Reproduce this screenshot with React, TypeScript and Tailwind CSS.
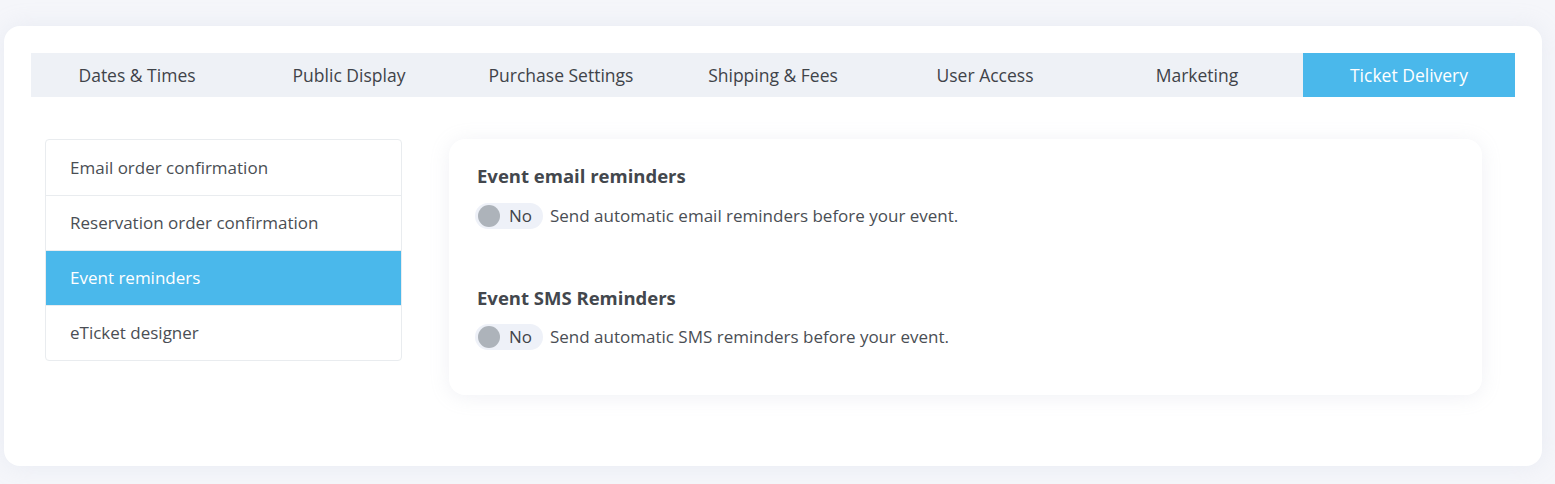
import { useState } from 'react';

const tabs = [
  'Dates & Times',
  'Public Display',
  'Purchase Settings',
  'Shipping & Fees',
  'User Access',
  'Marketing',
  'Ticket Delivery',
];

const menu = [
  'Email order confirmation',
  'Reservation order confirmation',
  'Event reminders',
  'eTicket designer',
];

function Toggle({ on, onClick }: { on: boolean; onClick: () => void }) {
  return (
    <button
      onClick={onClick}
      className="flex items-center h-[26px] w-[68px] rounded-full bg-[#eef1f8] pl-[3px] gap-[9px] text-[17px] text-[#3f4349]"
    >
      <span className={`w-[22px] h-[22px] rounded-full ${on ? 'bg-[#4ab8eb]' : 'bg-[#adb3ba]'}`} />
      {on ? 'Yes' : 'No'}
    </button>
  );
}

function App() {
  const [activeTab, setActiveTab] = useState('Ticket Delivery');
  const [activeItem, setActiveItem] = useState('Event reminders');
  const [emailOn, setEmailOn] = useState(false);
  const [smsOn, setSmsOn] = useState(false);

  return (
    <div
      className="min-h-screen bg-[#f5f6fa] pt-[26px] pb-[18px]"
      style={{ fontFamily: '"Open Sans", "Noto Sans", sans-serif' }}
    >
      <div className="ml-1 w-[1538px] h-[440px] rounded-[16px] bg-white shadow-[0_0_24px_rgba(180,190,210,0.18)] px-[27px] pt-[27px]">
        {/* Tabs */}
        <div className="grid grid-cols-7 h-[44px] bg-[#eef1f6]">
          {tabs.map((t) => (
            <button
              key={t}
              onClick={() => setActiveTab(t)}
              className={`text-[17.5px] ${activeTab === t ? 'bg-[#4ab8eb] text-white' : 'text-[#3f4349]'}`}
            >
              {t}
            </button>
          ))}
        </div>

        <div className="flex items-start gap-[47px] mt-[42px] pl-[14px] pr-[33px]">
          {/* Side menu */}
          <div className="w-[357px] shrink-0 rounded-[4px] border border-[#e9ecef] bg-white overflow-hidden">
            {menu.map((m, i) => (
              <button
                key={m}
                onClick={() => setActiveItem(m)}
                className={`flex items-center w-full h-[55px] px-6 text-left text-[17px] ${
                  i > 0 ? 'border-t border-[#e9ecef]' : ''
                } ${activeItem === m ? 'bg-[#4ab8eb] text-white border-[#4ab8eb]' : 'text-[#4a4e54]'}`}
              >
                {m}
              </button>
            ))}
          </div>

          {/* Settings card */}
          <div className="flex-1 rounded-[16px] bg-white shadow-[0_2px_20px_rgba(160,170,190,0.16)] px-7 pt-[25px] pb-[45px]">
            <h3 className="text-[18.5px] leading-6 font-bold text-[#43474d]">Event email reminders</h3>
            <div className="flex items-center gap-[7px] mt-[15px] ml-[-2px]">
              <Toggle on={emailOn} onClick={() => setEmailOn(!emailOn)} />
              <span className="text-[17px] text-[#4a4e54]">Send automatic email reminders before your event.</span>
            </div>

            <h3 className="text-[18.5px] leading-6 font-bold text-[#43474d] mt-[57px]">Event SMS Reminders</h3>
            <div className="flex items-center gap-[7px] mt-[14px] ml-[-2px]">
              <Toggle on={smsOn} onClick={() => setSmsOn(!smsOn)} />
              <span className="text-[17px] text-[#4a4e54]">Send automatic SMS reminders before your event.</span>
            </div>
          </div>
        </div>
      </div>
    </div>
  );
}

export default App;
